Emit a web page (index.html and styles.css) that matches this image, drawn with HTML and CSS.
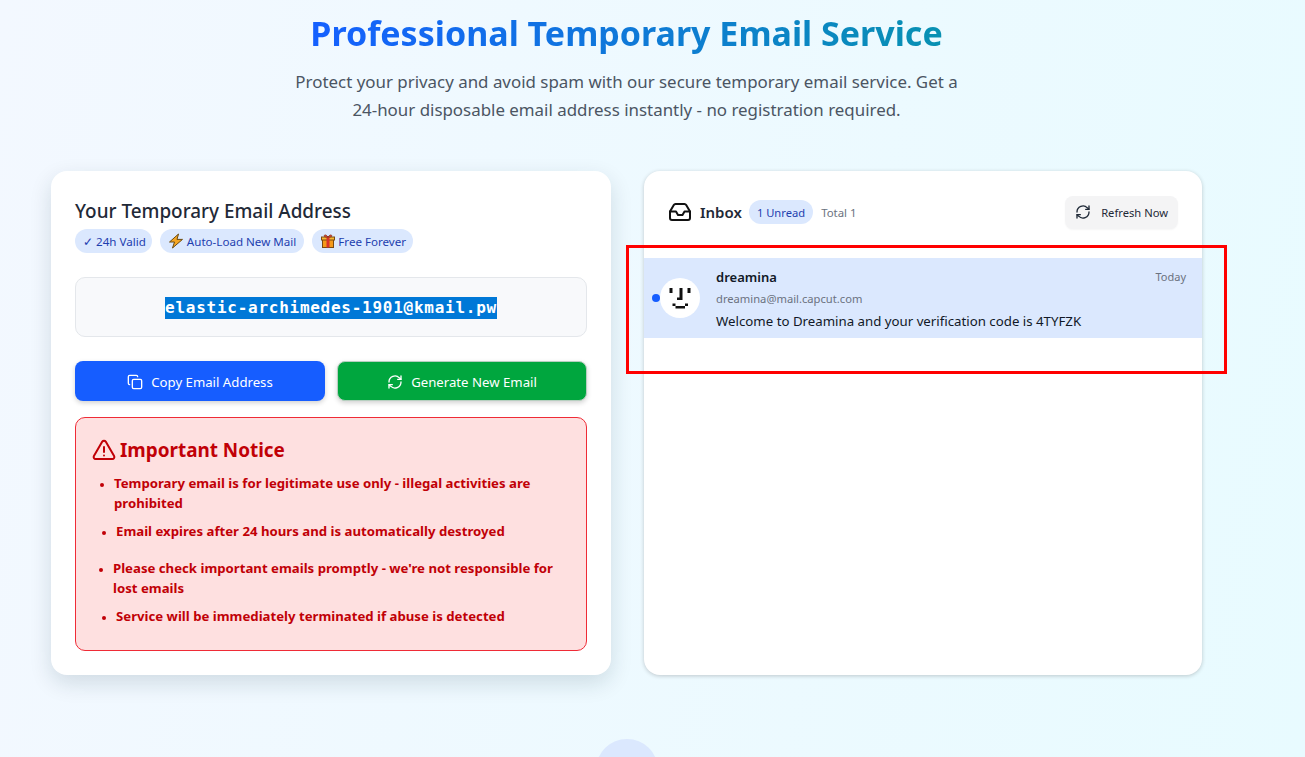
FILE: index.html
```html
<!DOCTYPE html>
<html lang="en">
<head>
    <meta charset="UTF-8">
    <meta name="viewport" content="width=device-width, initial-scale=1.0">
    <title>Professional Temporary Email Service</title>
    <link rel="stylesheet" href="styles.css">
</head>
<body>

    <main class="page">
        <!-- Page heading -->
        <header class="hero">
            <h1>Professional Temporary Email Service</h1>
            <p>Protect your privacy and avoid spam with our secure temporary email service. Get a 24-hour disposable email address instantly - no registration required.</p>
        </header>

        <div class="columns">
            <!-- Address card -->
            <section class="card address-card">
                <h2>Your Temporary Email Address</h2>
                <div class="tags">
                    <span class="tag">✓ 24h Valid</span>
                    <span class="tag">
                        <svg class="tag-icon" viewBox="0 0 16 16"><path d="M10.5 1 1.5 9h5L4.5 15l10-8.600H9z" fill="#f5a623" stroke="#6b4a10" stroke-width="1" stroke-linejoin="round"/></svg>
                        Auto-Load New Mail
                    </span>
                    <span class="tag">
                        <svg class="tag-icon" viewBox="0 0 16 16"><rect x="2.5" y="6.5" width="11" height="8" fill="#f59a1b" stroke="#7a4a12"/><rect x="1.5" y="4" width="13" height="3" fill="#f7b733" stroke="#7a4a12"/><rect x="6.5" y="4" width="3" height="10.5" fill="#d8342c"/><path d="M8 4C6 1 3.5 1.5 4.5 3.5 5 4 6.5 4 8 4c1.5 0 3 0 3.5-.5C12.5 1.5 10 1 8 4z" fill="#e8503a" stroke="#7a2a12" stroke-width=".7"/></svg>
                        Free Forever
                    </span>
                </div>

                <div class="address-box"><span class="address">elastic-archimedes-1901@kmail.pw</span></div>

                <div class="actions">
                    <button class="btn btn-copy" type="button">
                        <svg class="btn-icon" viewBox="0 0 24 24"><rect x="8" y="8" width="14" height="14" rx="2"/><path d="M4 16c-1 0-2-1-2-2V4c0-1 1-2 2-2h10c1 0 2 1 2 2"/></svg>
                        Copy Email Address
                    </button>
                    <button class="btn btn-generate" type="button">
                        <svg class="btn-icon" viewBox="0 0 24 24"><path d="M3 12a9 9 0 0 1 15.5-6.2L21 8"/><path d="M21 3v5h-5"/><path d="M21 12a9 9 0 0 1-15.5 6.2L3 16"/><path d="M8 16H3v5"/></svg>
                        Generate New Email
                    </button>
                </div>

                <div class="notice">
                    <h3>
                        <svg class="notice-icon" viewBox="0 0 24 24"><path d="M10.3 3.6 1.9 18a2 2 0 0 0 1.700 3h16.800a2 2 0 0 0 1.700-3L13.700 3.600a2 2 0 0 0-3.400 0z"/><path d="M12 9v5"/><path d="M12 17.5v.1"/></svg>
                        Important Notice
                    </h3>
                    <ul>
                        <li>Temporary email is for legitimate use only - illegal activities are prohibited</li>
                        <li>Email expires after 24 hours and is automatically destroyed</li>
                        <li>Please check important emails promptly - we're not responsible for lost emails</li>
                        <li>Service will be immediately terminated if abuse is detected</li>
                    </ul>
                </div>
            </section>

            <!-- Inbox card -->
            <section class="card inbox-card">
                <div class="inbox-head">
                    <svg class="inbox-icon" viewBox="0 0 24 24"><path d="M7.5 4h9a2 2 0 0 1 1.700 1L22 11.500V18a2 2 0 0 1-2 2H4a2 2 0 0 1-2-2v-6.500L5.800 5a2 2 0 0 1 1.700-1z"/><path d="M2 11.500h6l2 3.500h4.500l2-3.500H22"/></svg>
                    <h2>Inbox</h2>
                    <span class="tag">1 Unread</span>
                    <span class="total">Total 1</span>
                    <button class="refresh" type="button">
                        <svg class="refresh-icon" viewBox="0 0 24 24"><path d="M3 12a9 9 0 0 1 15.5-6.2L21 8"/><path d="M21 3v5h-5"/><path d="M21 12a9 9 0 0 1-15.5 6.2L3 16"/><path d="M8 16H3v5"/></svg>
                        Refresh Now
                    </button>
                </div>

                <div class="mail">
                    <span class="dot"></span>
                    <span class="avatar">
                        <svg viewBox="0 0 40 40" width="40" height="40" fill="#111"><rect x="9.5" y="10" width="3" height="5"/><rect x="27.5" y="10" width="3" height="5"/><rect x="19.5" y="10" width="3" height="12"/><rect x="17" y="19.5" width="3" height="2.5"/><rect x="12.5" y="25.5" width="3" height="2.5"/><rect x="15.5" y="28" width="9.5" height="2.5"/><rect x="25" y="25.5" width="3" height="2.5"/></svg>
                    </span>
                    <div class="mail-body">
                        <div class="mail-top">
                            <strong>dreamina</strong>
                            <span class="mail-date">Today</span>
                        </div>
                        <div class="mail-from">dreamina@mail.capcut.com</div>
                        <div class="mail-subject">Welcome to Dreamina and your verification code is 4TYFZK</div>
                    </div>
                </div>
            </section>
        </div>

        <div class="bubble"></div>
    </main>

    <!-- Red marker drawn over the screenshot -->
    <div class="marker"></div>

</body>
</html>
```

FILE: styles.css
```css
/* General */
html, body {
    height: 100%;
}

body {
    margin: 0;
    font-family: 'Noto Sans', 'Open Sans', sans-serif;
    color: #1f2937;
    background: linear-gradient(100deg, #f3f8ff 0%, #e8fbff 100%);
    overflow: hidden;
    position: relative;
}

h1, h2, h3, p, ul {
    margin: 0;
    padding: 0;
}

button {
    font-family: inherit;
    border: none;
    cursor: pointer;
}

.page {
    padding: 0 103px 0 51px;
    height: 757px;
    box-sizing: border-box;
    overflow: hidden;
}

/* Heading */
.hero {
    text-align: center;
    padding-top: 8px;
    height: 171px;
    box-sizing: border-box;
}

.hero h1 {
    display: inline-block;
    font-size: 34px;
    line-height: 50px;
    font-weight: 700;
    background: linear-gradient(90deg, #1560ff, #0891b2);
    -webkit-background-clip: text;
    background-clip: text;
    color: transparent;
}

.hero p {
    width: 680px;
    margin: 10px auto 0;
    font-size: 16.9px;
    line-height: 28px;
    color: #4b5563;
}

/* Cards */
.columns {
    display: grid;
    grid-template-columns: 560px 558px;
    gap: 33px;
}

.card {
    background: #fff;
    border-radius: 16px;
    height: 504px;
    box-sizing: border-box;
}

.address-card {
    padding: 28px 24px 24px;
    box-shadow: 0 8px 22px rgba(0, 40, 60, 0.14);
}

.inbox-card {
    box-shadow: 0 1px 4px rgba(0, 0, 0, 0.2);
}

.card h2 {
    font-size: 18.9px;
    line-height: 24px;
    font-weight: 500;
}

.tags {
    display: flex;
    gap: 8px;
    margin-top: 6px;
}

.tag {
    display: inline-flex;
    align-items: center;
    gap: 3px;
    height: 24px;
    padding: 0 8px;
    border-radius: 12px;
    background: #dbe8fe;
    color: #1e40af;
    font-size: 11.6px;
}

.tags .tag:first-child {
    padding-right: 6px;
}

.tags .tag:last-child {
    gap: 2px;
    padding-right: 7px;
}

.tag-icon {
    width: 16px;
    height: 16px;
}

.address-box {
    margin-top: 24px;
    height: 60px;
    padding-top: 2px;
    display: flex;
    align-items: center;
    justify-content: center;
    background: #f8f9fb;
    border: 1px solid #e4e7eb;
    border-radius: 10px;
    box-sizing: border-box;
}

.address {
    font-family: 'DejaVu Sans Mono', monospace;
    font-size: 16px;
    font-weight: 700;
    letter-spacing: 0.74px;
    line-height: 22px;
    background: #0078d7;
    color: #fff;
}

/* Buttons */
.actions {
    display: grid;
    grid-template-columns: 250px 250px;
    gap: 12px;
    margin-top: 24px;
}

.btn {
    height: 40px;
    padding-top: 2px;
    display: flex;
    align-items: center;
    justify-content: center;
    gap: 8px;
    border-radius: 8px;
    color: #fff;
    font-size: 13.2px;
    box-shadow: 0 2px 5px rgba(0, 0, 0, 0.18);
}

.btn-copy {
    background: #165dff;
}

.btn-generate {
    background: #00a63e;
    border: 1px solid #b7cfc0;
}

.btn-icon, .refresh-icon, .inbox-icon, .notice-icon {
    fill: none;
    stroke: currentColor;
    stroke-width: 2;
    stroke-linecap: round;
    stroke-linejoin: round;
}

.btn-icon {
    width: 16px;
    height: 16px;
}

/* Notice box */
.notice {
    margin-top: 16px;
    height: 234px;
    box-sizing: border-box;
    padding: 18px 16px 0;
    background: #fee0e0;
    border: 1px solid #ef2b36;
    border-radius: 10px;
    color: #c10007;
}

.notice h3 {
    display: flex;
    align-items: center;
    gap: 4px;
    font-size: 18.9px;
    line-height: 28px;
    font-weight: 700;
}

.notice-icon {
    width: 24px;
    height: 24px;
}

.notice ul {
    margin-top: 9px;
    padding-left: 22px;
    font-size: 13.2px;
    line-height: 20px;
    font-weight: 700;
}

.notice li {
    margin-bottom: 8px;
}

.notice li::marker {
    font-size: 10px;
}

.notice li:nth-child(2) {
    margin-left: 2px;
    margin-bottom: 17px;
}

.notice li:nth-child(3) {
    margin-left: -1px;
}

.notice li:nth-child(4) {
    margin-left: 2px;
}

/* Inbox */
.inbox-head {
    display: flex;
    align-items: center;
    height: 87px;
    padding: 0 24px 5px;
    box-sizing: border-box;
}

.inbox-icon {
    width: 24px;
    height: 24px;
    margin-right: 8px;
    color: #111;
}

.inbox-head h2 {
    font-size: 15px;
    font-weight: 600;
    margin-right: 7px;
}

.inbox-head .tag {
    font-size: 11.2px;
}

.total {
    margin-left: 8px;
    font-size: 11.4px;
    color: #6b7280;
}

.refresh {
    margin-left: auto;
    height: 33px;
    padding: 0 10px 0 10px;
    display: flex;
    align-items: center;
    gap: 10px;
    background: #f4f4f5;
    border-radius: 8px;
    font-size: 11.2px;
    color: #1f2937;
    box-shadow: 0 1px 2px rgba(0, 0, 0, 0.04);
}

.refresh-icon {
    width: 16px;
    height: 16px;
}

.mail {
    display: flex;
    align-items: center;
    height: 80px;
    background: #dbe8fe;
    position: relative;
    padding-left: 16px;
    padding-right: 16px;
}

.dot {
    position: absolute;
    left: 8px;
    top: 36px;
    width: 8px;
    height: 8px;
    border-radius: 50%;
    background: #165dff;
}

.avatar {
    flex: none;
    width: 40px;
    height: 40px;
    border-radius: 50%;
    background: #fff;
    margin-right: 16px;
}

.avatar svg {
    display: block;
}

.mail-body {
    flex: 1;
    padding-top: 2px;
}

.mail-top {
    display: flex;
    justify-content: space-between;
    font-size: 13px;
    line-height: 20px;
}

.mail-top strong {
    font-weight: 600;
    color: #111827;
}

.mail-date {
    font-size: 11px;
    color: #6b7280;
}

.mail-from {
    margin-top: 2px;
    font-size: 11.2px;
    line-height: 20px;
    color: #6b7280;
}

.mail-subject {
    margin-top: 2px;
    font-size: 13.25px;
    line-height: 20px;
    color: #111827;
}

.bubble {
    width: 62px;
    height: 62px;
    margin: 64px auto 0;
    border-radius: 50%;
    background: #dbe8fe;
}

/* Annotation */
.marker {
    position: absolute;
    left: 626px;
    top: 245px;
    width: 601px;
    height: 129px;
    box-sizing: border-box;
    border: 3px solid #ff0000;
}
```
